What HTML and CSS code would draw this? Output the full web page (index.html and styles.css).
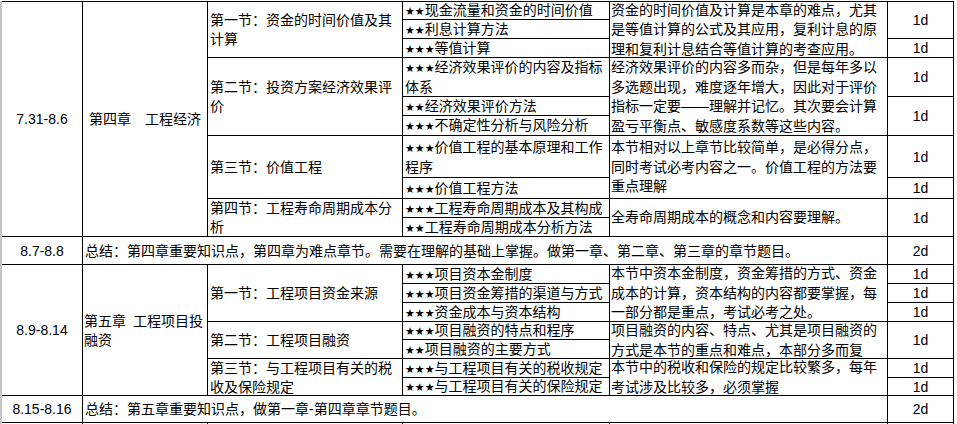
FILE: index.html
```html
<!DOCTYPE html>
<html lang="zh-CN">
<head>
<meta charset="utf-8">
<title>学习计划</title>
<link rel="stylesheet" href="styles.css">
</head>
<body>
<div class="page">
  <div class="sheet">
    <!-- 第四章 -->
    <div class="cell c1 r10 center"><span class="txt">7.31-8.6</span></div>
    <div class="cell c2 r10 center"><span class="txt">第四章　工程经济</span></div>
    <div class="cell c3 r3"><span class="txt">第一节：资金的时间价值及其<br>计算</span></div>
    <div class="cell c4"><span class="txt"><span class="star">★★</span>现金流量和资金的时间价值</span></div>
    <div class="cell c5 r3 desc"><span class="txt">资金的时间价值及计算是本章的难点，尤其<br>是等值计算的公式及其应用，复利计息的原<br>理和复利计息结合等值计算的考查应用。</span></div>
    <div class="cell c6 r2 center"><span class="txt">1d</span></div>

    <div class="cell c4"><span class="txt"><span class="star">★★</span>利息计算方法</span></div>

    <div class="cell c4"><span class="txt"><span class="star">★★★</span>等值计算</span></div>
    <div class="cell c6 center"><span class="txt">1d</span></div>

    <div class="cell c3 r3"><span class="txt">第二节：投资方案经济效果评<br>价</span></div>
    <div class="cell c4"><span class="txt"><span class="star">★★★</span>经济效果评价的内容及指标<br>体系</span></div>
    <div class="cell c5 r3 desc"><span class="txt">经济效果评价的内容多而杂，但是每年多以<br>多选题出现，难度逐年增大，因此对于评价<br>指标一定要——理解并记忆。其次要会计算<br>盈亏平衡点、敏感度系数等这些内容。</span></div>
    <div class="cell c6 center"><span class="txt">1d</span></div>

    <div class="cell c4"><span class="txt"><span class="star">★★</span>经济效果评价方法</span></div>
    <div class="cell c6 r2 center"><span class="txt">1d</span></div>

    <div class="cell c4"><span class="txt"><span class="star">★★★</span>不确定性分析与风险分析</span></div>

    <div class="cell c3 r2"><span class="txt">第三节：价值工程</span></div>
    <div class="cell c4"><span class="txt"><span class="star">★★★</span>价值工程的基本原理和工作<br>程序</span></div>
    <div class="cell c5 r2 desc"><span class="txt">本节相对以上章节比较简单，是必得分点，<br>同时考试必考内容之一。价值工程的方法要<br>重点理解</span></div>
    <div class="cell c6 center"><span class="txt">1d</span></div>

    <div class="cell c4"><span class="txt"><span class="star">★★★</span>价值工程方法</span></div>
    <div class="cell c6 center"><span class="txt">1d</span></div>

    <div class="cell c3 r2"><span class="txt">第四节：工程寿命周期成本分<br>析</span></div>
    <div class="cell c4"><span class="txt"><span class="star">★★★</span>工程寿命周期成本及其构成</span></div>
    <div class="cell c5 r2 desc"><span class="txt">全寿命周期成本的概念和内容要理解。</span></div>
    <div class="cell c6 r2 center"><span class="txt">1d</span></div>

    <div class="cell c4"><span class="txt"><span class="star">★★</span>工程寿命周期成本分析方法</span></div>

    <!-- 总结 -->
    <div class="cell c1 center"><span class="txt">8.7-8.8</span></div>
    <div class="cell sum"><span class="txt">总结：第四章重要知识点，第四章为难点章节。需要在理解的基础上掌握。做第一章、第二章、第三章的章节题目。</span></div>
    <div class="cell c6 center"><span class="txt">2d</span></div>

    <!-- 第五章 -->
    <div class="cell c1 r7 center"><span class="txt">8.9-8.14</span></div>
    <div class="cell c2 r7 chap"><span class="txt">第五章&ensp;工程项目投<br>融资</span></div>
    <div class="cell c3 r3"><span class="txt">第一节：工程项目资金来源</span></div>
    <div class="cell c4"><span class="txt"><span class="star">★★★</span>项目资本金制度</span></div>
    <div class="cell c5 r3 desc"><span class="txt">本节中资本金制度，资金筹措的方式、资金<br>成本的计算，资本结构的内容都要掌握，每<br>一部分都是重点，考试必考之处。</span></div>
    <div class="cell c6 center"><span class="txt">1d</span></div>

    <div class="cell c4"><span class="txt"><span class="star">★★★</span>项目资金筹措的渠道与方式</span></div>
    <div class="cell c6 center"><span class="txt">1d</span></div>

    <div class="cell c4"><span class="txt"><span class="star">★★★</span>资金成本与资本结构</span></div>
    <div class="cell c6 center"><span class="txt">1d</span></div>

    <div class="cell c3 r2"><span class="txt">第二节：工程项目融资</span></div>
    <div class="cell c4"><span class="txt"><span class="star">★★★</span>项目融资的特点和程序</span></div>
    <div class="cell c5 r2 desc"><span class="txt">项目融资的内容、特点、尤其是项目融资的<br>方式是本节的重点和难点，本部分多而复</span></div>
    <div class="cell c6 r2 center"><span class="txt">1d</span></div>

    <div class="cell c4"><span class="txt"><span class="star">★★</span>项目融资的主要方式</span></div>

    <div class="cell c3 r2"><span class="txt">第三节：与工程项目有关的税<br>收及保险规定</span></div>
    <div class="cell c4"><span class="txt"><span class="star">★★★</span>与工程项目有关的税收规定</span></div>
    <div class="cell c5 r2 desc"><span class="txt">本节中的税收和保险的规定比较繁多，每年<br>考试涉及比较多，必须掌握</span></div>
    <div class="cell c6 center"><span class="txt">1d</span></div>

    <div class="cell c4"><span class="txt"><span class="star">★★★</span>与工程项目有关的保险规定</span></div>
    <div class="cell c6 center"><span class="txt">1d</span></div>

    <!-- 总结 -->
    <div class="cell c1 center"><span class="txt">8.15-8.16</span></div>
    <div class="cell sum"><span class="txt">总结：第五章重要知识点，做第一章-第四章章节题目。</span></div>
    <div class="cell c6 center"><span class="txt">2d</span></div>

    <!-- 下一行 -->
    <div class="cell c1"></div>
    <div class="cell c2"></div>
    <div class="cell c3"></div>
    <div class="cell c4"></div>
    <div class="cell c5"></div>
    <div class="cell c6"></div>
  </div>
</div>
</body>
</html>
```
FILE: styles.css
```css
html, body {
  margin: 0;
  padding: 0;
  background: #ffffff;
}

body {
  font-family: "Liberation Sans", "Noto Sans CJK JP", "Noto Sans CJK SC", sans-serif;
  font-size: 14px;
  color: #000000;
}

.page {
  padding-top: 1px;
}

.sheet {
  display: grid;
  grid-template-columns: 80px 124px 194px 206px 277px 65px;
  grid-template-rows: 17px 18px 18px 38px 18px 19px 41px 20px 18px 18px 27px 18px 18px 18px 17px 18px 18px 17px 26px 20px;
  gap: 1px;
  background: #000000;
  padding: 1px 1px 0 0;
  border-left: 2px solid #c4c4c4;
  width: max-content;
}

.cell {
  background: #ffffff;
  display: flex;
  align-items: center;
  padding: 1px 2px 0 2px;
  line-height: 19px;
  white-space: nowrap;
  overflow: hidden;
  min-width: 0;
  min-height: 0;
}

.txt {
  display: block;
}

.center {
  justify-content: center;
  text-align: center;
}

.chap {
  padding-left: 1px;
}

.desc {
  padding-left: 1px;
  line-height: 19.5px;
}

.star {
  font-family: "DejaVu Sans", sans-serif;
  font-size: 11px;
}

.c1 { grid-column: 1; }
.c2 { grid-column: 2; }
.c3 { grid-column: 3; }
.c4 { grid-column: 4; }
.c5 { grid-column: 5; }
.c6 { grid-column: 6; }
.sum { grid-column: 2 / span 4; }

.r2 { grid-row: span 2; }
.r3 { grid-row: span 3; }
.r7 { grid-row: span 7; }
.r10 { grid-row: span 10; }
```
